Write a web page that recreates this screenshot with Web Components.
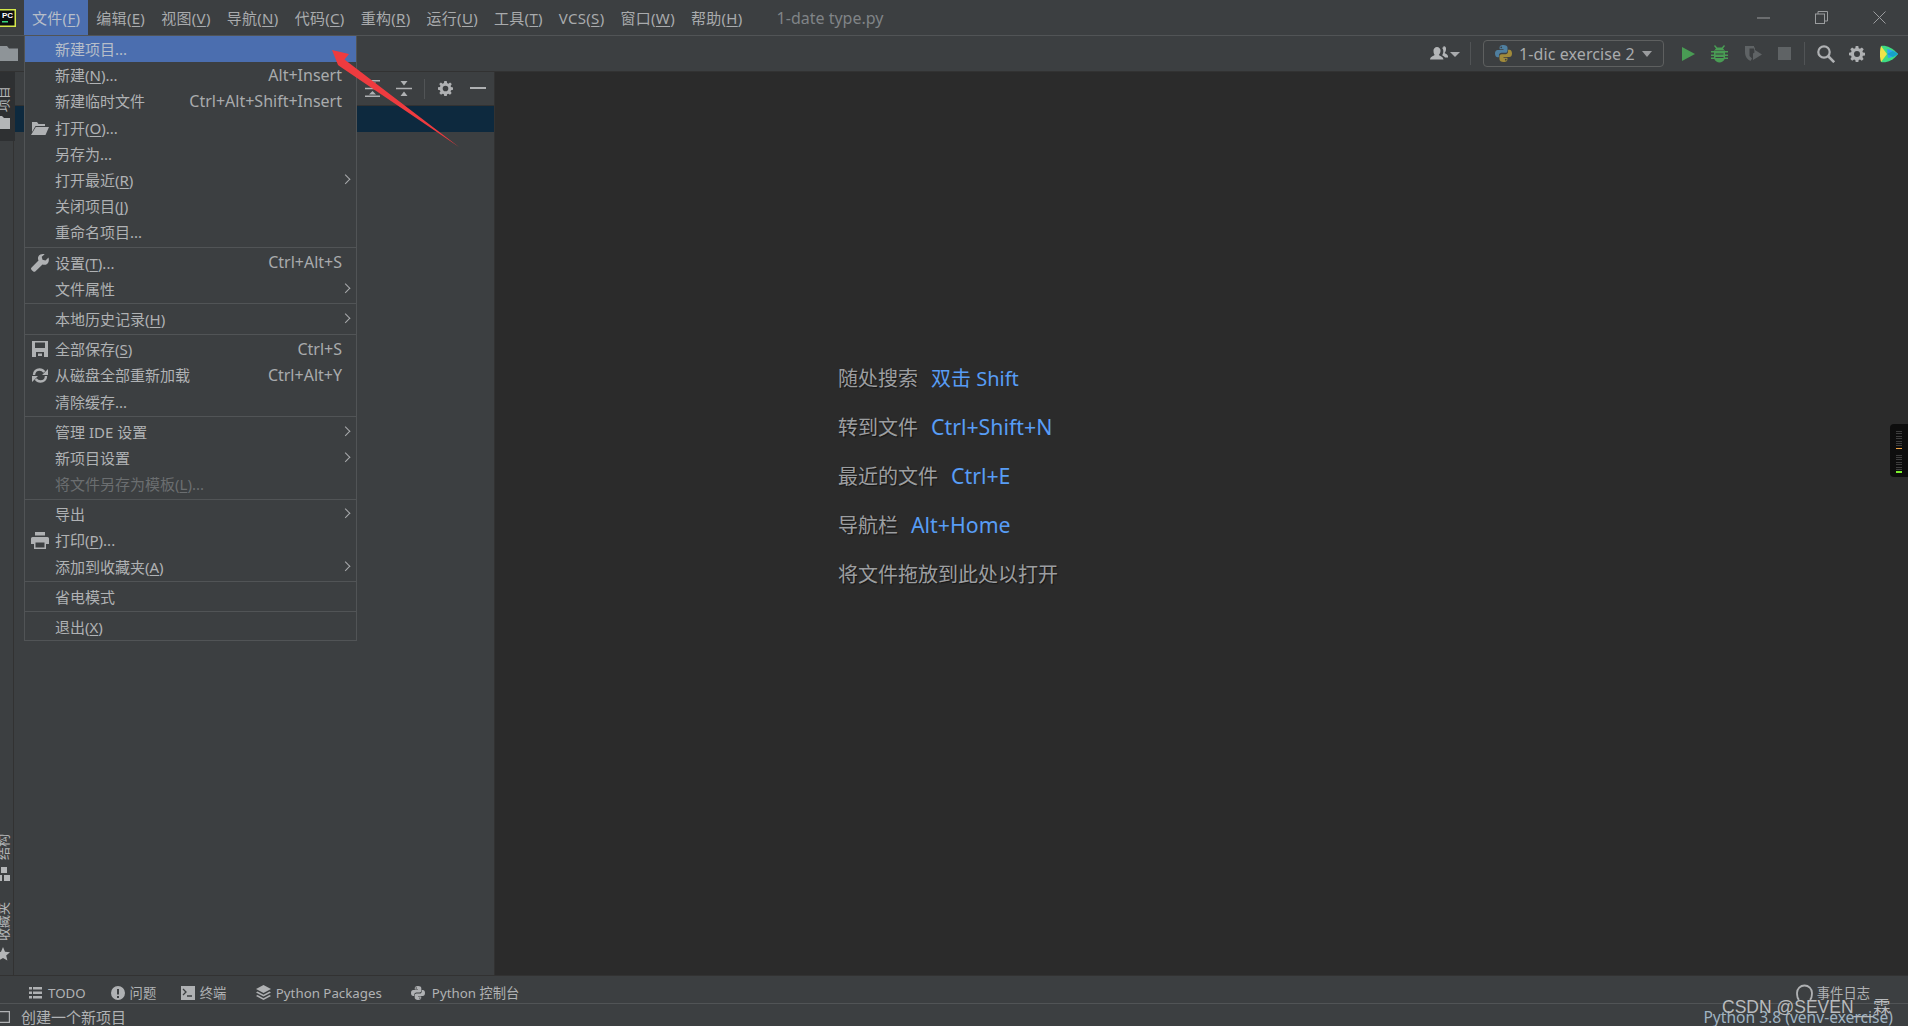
<!DOCTYPE html>
<html lang="zh"><head><meta charset="utf-8"><title>PyCharm</title>
<style>
html,body{margin:0;padding:0;background:#3c3f41;overflow:hidden}
body{font-family:"Noto Sans","Noto Sans CJK SC",sans-serif;font-size:15px;color:#b4b6b8}
u{text-underline-offset:2px;text-decoration-thickness:1px}
svg{display:block}
</style></head><body>
<ide-app>
  <ide-titlebar></ide-titlebar>
  <ide-toolbar></ide-toolbar>
  <ide-main>
    <ide-stripe></ide-stripe>
    <ide-panel></ide-panel>
    <ide-welcome>
      <hint-row label="随处搜索" key-text="双击 Shift"></hint-row>
      <hint-row label="转到文件" key-text="Ctrl+Shift+N" latin></hint-row>
      <hint-row label="最近的文件" key-text="Ctrl+E" latin></hint-row>
      <hint-row label="导航栏" key-text="Alt+Home" latin></hint-row>
      <hint-row label="将文件拖放到此处以打开"></hint-row>
    </ide-welcome>
  </ide-main>
  <ide-tools></ide-tools>
  <ide-status></ide-status>
  <file-menu>
    <menu-row selected>新建项目...</menu-row>
    <menu-row key-text="Alt+Insert">新建(<u>N</u>)...</menu-row>
    <menu-row key-text="Ctrl+Alt+Shift+Insert">新建临时文件</menu-row>
    <menu-row icon="open">打开(<u>O</u>)...</menu-row>
    <menu-row>另存为...</menu-row>
    <menu-row arrow>打开最近(<u>R</u>)</menu-row>
    <menu-row>关闭项目(<u>J</u>)</menu-row>
    <menu-row>重命名项目...</menu-row>
    <menu-sep></menu-sep>
    <menu-row icon="wrench" key-text="Ctrl+Alt+S">设置(<u>T</u>)...</menu-row>
    <menu-row arrow>文件属性</menu-row>
    <menu-sep></menu-sep>
    <menu-row arrow>本地历史记录(<u>H</u>)</menu-row>
    <menu-sep></menu-sep>
    <menu-row icon="save" key-text="Ctrl+S">全部保存(<u>S</u>)</menu-row>
    <menu-row icon="reload" key-text="Ctrl+Alt+Y">从磁盘全部重新加载</menu-row>
    <menu-row>清除缓存...</menu-row>
    <menu-sep></menu-sep>
    <menu-row arrow>管理 IDE 设置</menu-row>
    <menu-row arrow>新项目设置</menu-row>
    <menu-row disabled>将文件另存为模板(<u>L</u>)...</menu-row>
    <menu-sep></menu-sep>
    <menu-row arrow>导出</menu-row>
    <menu-row icon="print">打印(<u>P</u>)...</menu-row>
    <menu-row arrow>添加到收藏夹(<u>A</u>)</menu-row>
    <menu-sep></menu-sep>
    <menu-row>省电模式</menu-row>
    <menu-sep></menu-sep>
    <menu-row>退出(<u>X</u>)</menu-row>
  </file-menu>
  <red-arrow></red-arrow>
  <mem-meter></mem-meter>
  <water-mark>CSDN @SEVEN__霖</water-mark>
</ide-app>
<script>
const G='#afb1b3';
const gear=(s,c=G)=>`<svg width="${s}" height="${s}" viewBox="0 0 16 16"><path fill="${c}" fill-rule="evenodd" d="M6.7 0h2.6l.4 2.2 1.3.6L12.9 1.500l1.800 1.800-1.300 1.900.5 1.200 2.100.4v2.600l-2.100.4-.5 1.300 1.200 1.800-1.800 1.800-1.800-1.200-1.300.5-.4 2.200H6.700l-.4-2.200-1.300-.5-1.800 1.200-1.800-1.800 1.200-1.800-.5-1.300L0 9.300V6.700l2.100-.4.500-1.200-1.300-1.800 1.800-1.800L5 2.800l1.300-.6zM8 5a3 3 0 1 0 0 6 3 3 0 0 0 0-6z"/></svg>`;
const py=(s,a,b)=>`<svg width="${s}" height="${s}" viewBox="0 0 16 16"><path fill="${a}" d="M8 0C5 0 4.300 1.200 4.300 2.600V4H8v.6H2.600C1 4.600 0 5.900 0 8s1 3.500 2.500 3.500h1.200V9.800c0-1.400 1.100-2.500 2.500-2.500h3.600c1.100 0 2-.9 2-2V2.600C11.800 1 10.300 0 8 0zM5.900 1.400a.8.8 0 1 1 0 1.600.8.8 0 0 1 0-1.600z"/><path fill="${b}" d="M8 16c3 0 3.700-1.200 3.700-2.600V12H8v-.6h5.400c1.600 0 2.600-1.300 2.600-3.400s-1-3.500-2.500-3.500h-1.200v1.700c0 1.400-1.100 2.500-2.500 2.500H6.200c-1.100 0-2 .9-2 2v2.500C4.200 15 5.700 16 8 16zm2.100-1.400a.8.800 0 1 1 0-1.600.8.800 0 0 1 0 1.600z"/></svg>`;
const ICON={
 open:`<svg width="18" height="14" viewBox="0 0 18 14"><path fill="${G}" d="M1 1h5l1.500 2H14v2H4.500L1 11zM4.800 6H18l-3.500 8H0z"/></svg>`,
 wrench:`<svg width="18" height="18" viewBox="0 0 18 18"><path fill="${G}" d="M17.500 3.500l-3 3-3-.8-.8-3 3-2.500C11 -.4 8.500.4 7.500 2.200c-.8 1.400-.6 3 0 4.200L.6 13.400a1.800 1.800 0 0 0 0 2.500l1.400 1.400c.7.7 1.800.7 2.500 0l7-6.900c1.300.6 2.900.7 4.200-.1 1.900-1.100 2.700-3.900 1.800-6.800z"/></svg>`,
 save:`<svg width="16" height="16" viewBox="0 0 16 16"><path fill="${G}" fill-rule="evenodd" d="M0 0h16v16H0zM3 1.500v5.500h10V1.500zM4 11v5h8v-5zM6 12.500h4V15H6z"/></svg>`,
 reload:`<svg width="16" height="15" viewBox="0 0 16 15"><g fill="none" stroke="${G}" stroke-width="2.400"><path d="M2 7C2 3.500 4.500 1.500 7.500 1.500c2.300 0 3.800 1 4.800 2.500"/><path d="M14 8c0 3.500-2.500 5.500-5.500 5.500-2.300 0-3.800-1-4.800-2.500"/></g><path fill="${G}" d="M16 1v6h-6zM0 14V8h6z"/></svg>`,
 print:`<svg width="18" height="17" viewBox="0 0 18 17"><path fill="${G}" fill-rule="evenodd" d="M4 0h10v3.500H4zM1.500 5h15A1.500 1.500 0 0 1 18 6.500V12h-3v5H3v-5H0V6.500A1.500 1.500 0 0 1 1.500 5zM4.500 10.500V15.500h9v-5z"/></svg>`
};
function def(name,css,html){
  customElements.define(name,class extends HTMLElement{
    constructor(){super();this.attachShadow({mode:'open'});}
    connectedCallback(){
      const h=typeof html==='function'?html(this):html;
      this.shadowRoot.innerHTML=`<style>${css}</style>${h}`;
    }
  });
}
def('ide-app',`:host{display:flex;flex-direction:column;position:relative;width:1908px;height:1026px;overflow:hidden;background:#3c3f41}`,`<slot></slot>`);

def('ide-titlebar',`:host{display:flex;align-items:stretch;height:35px;flex:none;border-bottom:1px solid #515456;box-sizing:content-box;color:#a9abad;font-size:15px}
.logo{width:24px;flex:none;display:flex;align-items:center}
.m{padding:0 8px;display:flex;align-items:center;white-space:nowrap;letter-spacing:.3px}
.m.on{background:#4b6eaf;color:#b7bec9}
u{text-underline-offset:2px;text-decoration-thickness:1px}
.title{margin-left:26px;display:flex;align-items:center;color:#808487;white-space:nowrap;font-size:16px}
.win{margin-left:auto;display:flex;align-items:center}
.win span{width:58px;height:35px;display:flex;align-items:center;justify-content:center}
svg{display:block}`,
()=>`<div class="logo"><svg width="16" height="18" viewBox="0 0 16 18"><rect x="-6" y="0" width="22" height="18" fill="#d5e84a"/><rect x="-4" y="1.500" width="18.500" height="15" fill="#0b0e10"/><text x="2" y="9" font-family="Liberation Sans" font-size="8" font-weight="700" fill="#fff">PC</text><rect x="2" y="12" width="6" height="1.500" fill="#37d67a"/></svg></div>`+
[['文件','F',1],['编辑','E'],['视图','V'],['导航','N'],['代码','C'],['重构','R'],['运行','U'],['工具','T'],['VCS','S'],['窗口','W'],['帮助','H']].map(([a,b,on])=>`<div class="m${on?' on':''}">${a}(<u>${b}</u>)</div>`).join('')+
`<div class="title">1-date type.py</div><div class="win">
<span><svg width="13" height="2"><rect width="13" height="1" y=".5" fill="#9a9c9e"/></svg></span>
<span><svg width="13" height="13" viewBox="0 0 13 13" fill="none" stroke="#9a9c9e"><rect x=".5" y="3" width="9" height="9.500"/><path d="M3 3V.5h9.500V10H10"/></svg></span>
<span><svg width="13" height="13" viewBox="0 0 13 13" stroke="#9a9c9e"><path d="M.5.5l12 12M12.500.5l-12 12"/></svg></span></div>`);

def('ide-toolbar',`:host{display:flex;align-items:center;height:35px;flex:none;border-bottom:1px solid #323232}
svg{display:block;flex:none}
.r{margin-left:auto;display:flex;align-items:center;padding-right:10px}
.sep{width:1px;height:23px;background:#515456;flex:none}
.cfg{width:181px;height:27px;box-sizing:border-box;border:1px solid #5e6060;border-radius:4px;display:flex;align-items:center;padding-left:11px;color:#a9abad;font-size:16px;white-space:nowrap;letter-spacing:.1px}
.cfg b{font-weight:400;margin-left:7px}
.cfg i{margin-left:auto;margin-right:11px;width:0;height:0;border:5px solid transparent;border-top:6px solid #9a9c9e;border-bottom:0}`,
()=>`<svg width="18" height="15" viewBox="0 0 18 15"><path fill="#8e9498" d="M0 0h7l2 2.500h9V15H0z"/></svg>
<div class="r">
<svg width="30" height="15" viewBox="0 0 30 15"><path fill="#b3b5b7" d="M7 1a3.500 3.500 0 0 1 3.500 3.800c0 2-1 3.500-1.700 4.300 1 .9 4.200 1.400 4.700 4.400H0c.4-3 3.600-3.500 4.700-4.400C4 8.300 3.500 6.800 3.500 4.800A3.500 3.500 0 0 1 7 1zM13 0a3 3 0 0 1 3 3.300c0 1.800-.8 3-1.400 3.700.8.700 2.600 1.100 3.400 3v1.500h-3c-.7-1.200-2-1.700-2.800-2.300.8-1.200 1.200-2.500 1.100-4.400 0-1-.4-2-1.100-2.700.5-.7 1.100-1.100 1.800-1.100z"/><path fill="#a9abad" d="M20 6h10l-5 5z"/></svg>
<div class="sep" style="margin-left:10px"></div>
<div class="cfg" style="margin-left:12px">${py(17,'#4f7f9f','#a08a3a')}<b>1-dic exercise 2</b><i></i></div>
<svg style="margin-left:18px" width="13" height="14" viewBox="0 0 13 14"><path fill="#499c54" d="M0 0l13 7-13 7z"/></svg>
<svg style="margin-left:16px" width="17" height="18" viewBox="0 0 17 18"><path fill="#499c54" d="M3 1l1-1 2.200 2.500h4.600L13 0l1 1-2 2.500c.6.500 1 1 1.200 1.500H3.800c.2-.5.600-1 1.200-1.500zM0 6h3v-.5h11V6h3v1.500h-3v2h3V11h-3v1.500h3V14h-3.300c-1 2-3 3.500-5.200 3.500S4.300 16 3.300 14H0v-1.500h3V11H0V9.500h3v-2H0z"/><path fill="#3c3f41" d="M4.500 8.500h8v1h-8zM4.500 12h8v1h-8z"/></svg>
<svg style="margin-left:16px" width="18" height="18" viewBox="0 0 18 18"><path fill="#5f6365" d="M1 1h9v2.500H5.500V11L8 13.500 6.500 16C3 14.500 1 11 1 7zM11 2l-1 1 .5 4.500-1.500 1V15l9-5.500L11 5z"/></svg>
<svg style="margin-left:16px" width="13" height="13"><rect width="13" height="13" fill="#5f6365"/></svg>
<div class="sep" style="margin-left:13px"></div>
<svg style="margin-left:12px" width="18" height="18" viewBox="0 0 18 18" fill="none" stroke="#afb1b3" stroke-width="2.200"><circle cx="7" cy="7" r="5.700"/><path d="M11 11l6.200 6.200" stroke-width="2.600"/></svg>
<span style="margin-left:14px;display:block">${gear(16)}</span>
<svg style="margin-left:15px" width="18" height="18" viewBox="0 0 18 18"><path fill="#3ddc84" d="M1 1C5 0 12 2 18 9c-5 7-12 9-17 8z"/><path fill="#2ea3f2" d="M7 4c4 .5 8 2.500 11 5-3 2-6 3.500-10 4z"/><path fill="#f0e44a" d="M1 1l6 8-6 8c-1.500-5-1.500-11 0-16z"/><path fill="#15a3c8" d="M7 9l6-3 5 3-5 3z"/></svg>
</div>`);

def('ide-main',`:host{display:flex;flex:1;min-height:0;border-bottom:1px solid #323232}`,`<slot></slot>`);

def('ide-stripe',`:host{display:flex;flex-direction:column;width:14px;flex:none;box-sizing:border-box;border-right:1px solid #323232;overflow:visible;color:#b4b6b8;font-size:13px}
.tab{height:69px;width:15px;background:#2e3032;flex:none;display:flex;flex-direction:column;align-items:flex-start;padding-top:14px;box-sizing:border-box;overflow:hidden;position:relative;z-index:1}
.v{writing-mode:vertical-rl;text-orientation:sideways;transform:rotate(180deg);line-height:14px;width:14px;margin-left:-4px;white-space:nowrap;display:block}
.sp{flex:1}
svg{display:block;flex:none;margin-left:-4px}
.b{display:flex;flex-direction:column;overflow:hidden;width:13px}`,
()=>`<div class="tab"><span class="v">项目</span><svg style="margin-top:4px" width="14" height="13" viewBox="0 0 14 13"><path fill="#b4b6b8" d="M0 0h6l2 2h6v11H0z"/></svg></div>
<div class="sp"></div>
<div class="b"><span class="v">结构</span>
<svg style="margin-top:7px" width="14" height="14" viewBox="0 0 14 14"><path fill="#b4b6b8" d="M5 0h6v6H5zM0 8h6v6H0zM8 8h6v6H8z"/></svg>
<span class="v" style="margin-top:21px">收藏夹</span>
<svg style="margin-top:6px;margin-bottom:14px" width="14" height="14" viewBox="0 0 14 14"><path fill="#b4b6b8" d="M7 0l2 4.800 5 .4-3.800 3.300 1.200 5L7 11l-4.400 2.500 1.200-5L0 5.200l5-.4z"/></svg></div>`);

def('ide-panel',`:host{display:flex;flex-direction:column;width:481px;flex:none;box-sizing:border-box;border-right:1px solid #323232}
.h{height:34px;flex:none;box-sizing:border-box;border-bottom:1px solid #323232;display:flex;align-items:center;justify-content:flex-end;padding-right:8px;background:#3c3f41}
.h svg,.h span{display:block;flex:none}
.sep{width:1px;height:20px;background:#515456;margin:0 13px 0 12px}
.sel{height:26px;flex:none;background:#0d293e}`,
()=>`<div class="h">
<svg width="17" height="17" viewBox="0 0 17 17" style="margin-right:15px" fill="${G}"><path d="M1 0h15v1.500H1zM1 15.500h15V17H1zM1 7.800h15v1.400H1zM5 2.500h7L8.500 6zM5 14.500h7L8.500 11z"/></svg>
<svg width="16" height="15" viewBox="0 0 16 15" fill="${G}"><path d="M0 6.800h16v1.400H0zM4.500 0h7L8 4.500zM4.500 15h7L8 10.500z"/></svg>
<div class="sep"></div>
<span style="margin-right:17px">${gear(15)}</span>
<svg width="16" height="3"><rect width="16" height="2" fill="${G}"/></svg>
</div><div class="sel"></div>`);

def('ide-welcome',`:host{display:block;flex:1;background:#2b2b2b;padding:281px 0 0 343px;box-sizing:border-box;min-width:0}`,`<slot></slot>`);
def('hint-row',`:host{display:flex;height:49px;align-items:center;font-size:20px;color:#9c9ea0;white-space:nowrap}
div{display:flex;align-items:baseline}
span{text-shadow:1px 1px 1px #161616}
b{font-weight:400;color:#589df6;margin-left:13px}
:host([latin]) b{font-size:21.300px}`,
el=>`<div><span>${el.getAttribute('label')}</span>${el.getAttribute('key-text')?`<b>${el.getAttribute('key-text')}</b>`:''}</div>`);

def('ide-tools',`:host{display:flex;align-items:center;height:28px;box-sizing:border-box;padding-top:6px;flex:none;font-size:13.300px;border-bottom:1px solid #515456;color:#b0b2b4;white-space:nowrap}
svg{display:block;flex:none;margin-right:5px}
.i{display:flex;align-items:center}
.log{margin-left:auto;margin-right:38px}`,
()=>`<div class="i" style="margin-left:29px"><svg style="margin-right:6px" width="13" height="12" viewBox="0 0 13 12" fill="${G}"><path d="M0 0h3v2.500H0zM4 0h9v2.500H4zM0 4.500h3V7H0zM4 4.500h9V7H4zM0 9h3v2.500H0zM4 9h9v2.500H4z"/></svg>TODO</div>
<div class="i" style="margin-left:25px"><svg width="14" height="14" viewBox="0 0 14 14"><path fill="${G}" fill-rule="evenodd" d="M7 0a7 7 0 1 1 0 14A7 7 0 0 1 7 0zM6 3v5.500h2V3zm0 7v2h2v-2z"/></svg>问题</div>
<div class="i" style="margin-left:24.500px"><svg width="14" height="14" viewBox="0 0 14 14"><path fill="${G}" d="M0 0h14v14H0z"/><path fill="none" stroke="#3c3f41" stroke-width="1.300" d="M2 3l3 3-3 3M6 10h5"/></svg>终端</div>
<div class="i" style="margin-left:29.500px"><svg width="15" height="15" viewBox="0 0 15 15" fill="${G}"><path d="M7.500 0L15 4l-7.500 4L0 4zM1.500 6.500l6 3.200 6-3.200L15 7.500 7.500 11.500 0 7.500zM1.500 10l6 3.200 6-3.200 1.500 1-7.500 4-7.500-4z"/></svg>Python Packages</div>
<div class="i" style="margin-left:29px">${py(14,G,G)}<span style="margin-left:2px">Python 控制台</span></div>
<div class="i log"><svg style="margin-right:4px" width="17" height="17" viewBox="0 0 17 17" fill="none" stroke="${G}" stroke-width="1.800"><path d="M3 16C1.500 14.500 1 12.500 1 9a7.500 7.500 0 0 1 15 0c0 3.500-.5 5.500-2 7"/></svg>事件日志</div>`);

def('ide-status',`:host{display:flex;align-items:center;height:22px;box-sizing:border-box;padding-top:3px;flex:none;font-size:15px;color:#b0b2b4;white-space:nowrap;position:relative}
svg{display:block;flex:none;margin-right:11px}
.py{margin-left:auto;margin-right:15px;color:#9fb3c2;font-size:15.600px}`,
()=>`<svg width="10" height="12" viewBox="0 0 10 12" fill="none" stroke="${G}" stroke-width="1.200"><path d="M-1 .6h10.400v10.800H-1"/></svg><span>创建一个新项目</span><span class="py">Python 3.8 (venv-exercise)</span>`);

def('file-menu',`:host{position:absolute;left:24px;top:35px;width:333px;box-sizing:border-box;background:#3c3f41;border:1px solid #515456;display:block;z-index:5}`,`<slot></slot>`);
def('menu-sep',`:host{display:block;height:1px;background:#515456;margin:1.500px 0}`,``);
def('menu-row',`:host{display:flex;align-items:center;height:26.200px;box-sizing:border-box;padding:0 0 1px 30px;font-size:15px;color:#b0b2b4;position:relative;white-space:nowrap}
:host([selected]){background:#4b6eaf;color:#b7bec9}
:host([disabled]){color:#6b6e70}
.ic{position:absolute;left:5px;top:0;bottom:0;display:flex;align-items:center;width:20px;justify-content:center}
.k{margin-left:auto;margin-right:14px;color:#a9abad;font-size:16px}
.a{position:absolute;right:7px;top:50%;width:6px;height:6px;border:solid #a9abad;border-width:1.300px 1.300px 0 0;transform:translateY(-60%) rotate(45deg)}
svg{display:block}`,
el=>{const ic=el.getAttribute('icon'),k=el.getAttribute('key-text');
 return `${ic?`<span class="ic">${ICON[ic]}</span>`:''}<span><slot></slot></span>${k?`<span class="k">${k}</span>`:''}${el.hasAttribute('arrow')?'<span class="a"></span>':''}`;});

def('red-arrow',`:host{position:absolute;left:0;top:0;z-index:6;display:block;pointer-events:none}svg{display:block}`,
`<svg width="470" height="150" viewBox="0 0 470 150"><polygon fill="#ee3b3f" points="332,50 349,54 344.500,59.500 459,147 340,66.500 338,65"/></svg>`);

def('mem-meter',`:host{position:absolute;right:0;top:424px;width:18px;height:53px;background:#0e0e0e;border-radius:4px 0 0 4px;display:flex;flex-direction:column;align-items:flex-end;padding:7px 0 0 0;box-sizing:border-box;z-index:2}
i{display:block;width:6px;height:1px;background:#3e3e3e;margin:0 6px 1.400px 0}
.o{background:#f5a742;height:1.500px}.g{background:#7cf02c;height:1.500px}.sp{height:4px}`,
()=>`<i></i><i></i><i></i><i></i><i></i><i></i><i></i><i class="o"></i><div class="sp"></div><i></i><i></i><i></i><i></i><i></i><i></i><i></i><i class="g"></i>`);

def('water-mark',`:host{position:absolute;left:1722px;top:994px;font-size:17.500px;line-height:26px;color:#b9bbbd;white-space:nowrap;z-index:4;display:block;font-family:"Liberation Sans","Noto Sans CJK SC",sans-serif}`,`<slot></slot>`);
</script>
</body></html>
